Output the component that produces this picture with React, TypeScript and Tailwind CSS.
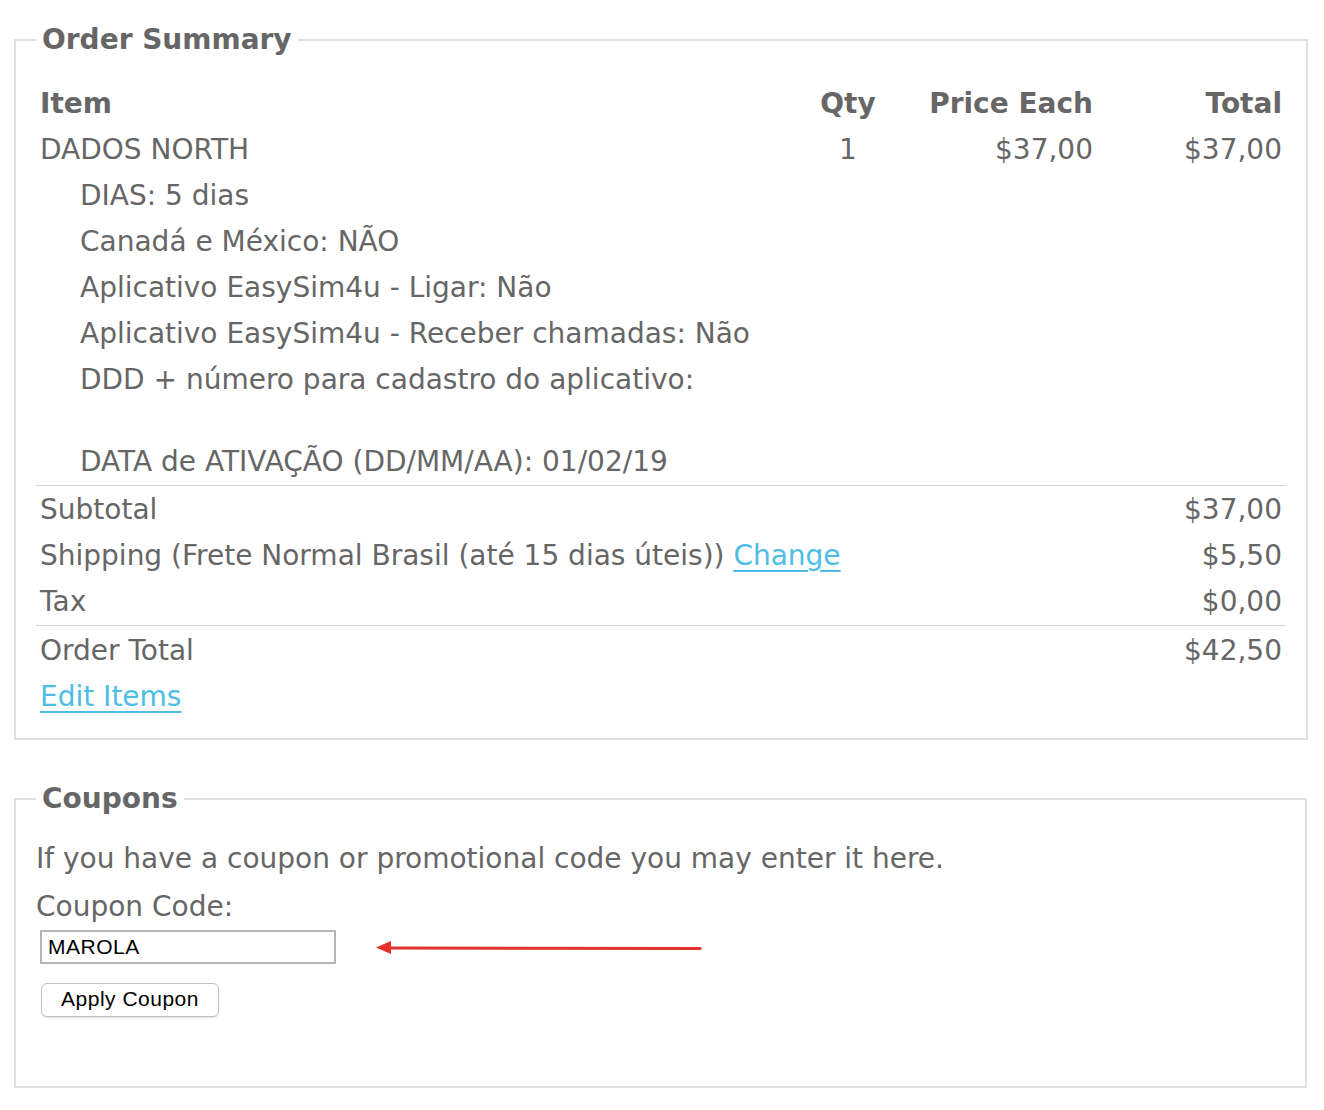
import React from "react"

const options = [
  "DIAS: 5 dias",
  "Canadá e México: NÃO",
  "Aplicativo EasySim4u - Ligar: Não",
  "Aplicativo EasySim4u - Receber chamadas: Não",
  "DDD + número para cadastro do aplicativo:",
]

const totals = [
  { label: "Subtotal", value: "$37,00" },
  { label: "Shipping (Frete Normal Brasil (até 15 dias úteis))", value: "$5,50", change: true },
  { label: "Tax", value: "$0,00" },
]

export default function App() {
  return (
    <div className="min-h-[1110px] bg-white pt-[22px] pl-[14px] pr-[17px] text-[28px] leading-[46px] text-[#666] font-['DejaVu_Sans',sans-serif]">
      <fieldset className="border-2 border-[#e0e0e0] px-[20px] pt-[23px] pb-[18px]">
        <legend className="px-[6px] text-[28px] font-bold leading-[36px]">Order Summary</legend>

        <div className="grid grid-cols-[776px_72px_213px_189px]">
          <div className="px-[4px] font-bold">Item</div>
          <div className="text-center font-bold">Qty</div>
          <div className="px-[4px] text-right font-bold">Price Each</div>
          <div className="px-[4px] text-right font-bold">Total</div>

          <div className="px-[4px]">DADOS NORTH</div>
          <div className="text-center">1</div>
          <div className="px-[4px] text-right">$37,00</div>
          <div className="px-[4px] text-right">$37,00</div>

          <div className="col-span-4 pl-[44px]">
            {options.map((o) => (
              <div key={o}>{o}</div>
            ))}
            <div className="h-[36px]" />
            <div>DATA de ATIVAÇÃO (DD/MM/AA): 01/02/19</div>
          </div>
        </div>

        <div className="border-t border-[#d4d4d4] pt-[1px]">
          {totals.map((t) => (
            <div key={t.label} className="flex justify-between px-[4px]">
              <span>
                {t.label}
                {t.change && (
                  <>
                    {" "}
                    <a href="#" className="text-[#4dbde6] underline underline-offset-[5px]">Change</a>
                  </>
                )}
              </span>
              <span>{t.value}</span>
            </div>
          ))}
        </div>
        <div className="border-t border-[#d4d4d4] pt-[2px]">
          <div className="flex justify-between px-[4px]">
            <span>Order Total</span>
            <span>$42,50</span>
          </div>
          <div className="px-[4px]">
            <a href="#" className="text-[#4dbde6] underline underline-offset-[5px]">Edit Items</a>
          </div>
        </div>
      </fieldset>

      <fieldset className="mt-[41px] border-2 border-[#e0e0e0] px-[20px] pt-[19px] pb-[69px]">
        <legend className="px-[6px] text-[28px] font-bold leading-[36px]">Coupons</legend>
        <p>If you have a coupon or promotional code you may enter it here.</p>
        <p className="mt-[2px]">Coupon Code:</p>
        <div className="relative">
          <input
            defaultValue="MAROLA"
            className="ml-[4px] block h-[34px] w-[296px] border-2 border-[#b5b5b5] px-[6px] text-[21px] tracking-[0.5px] text-black font-['Liberation_Sans',sans-serif] outline-none"
          />
          <svg className="absolute left-[340px] top-[10px]" width="330" height="16" viewBox="0 0 330 16">
            <line x1="12" y1="8" x2="324" y2="8.5" stroke="#e5312b" strokeWidth="3" strokeLinecap="round" />
            <polygon points="0,7.5 15,1 15,14" fill="#e5312b" />
          </svg>
        </div>
        <button className="ml-[5px] mt-[19px] block h-[34px] w-[178px] rounded-[6px] border border-[#c2c2c2] bg-white pb-[3px] text-[21px] leading-none tracking-[0.5px] text-black shadow-[0_1px_1px_rgba(0,0,0,0.12)] font-['Liberation_Sans',sans-serif]">
          Apply Coupon
        </button>
      </fieldset>
    </div>
  )
}
